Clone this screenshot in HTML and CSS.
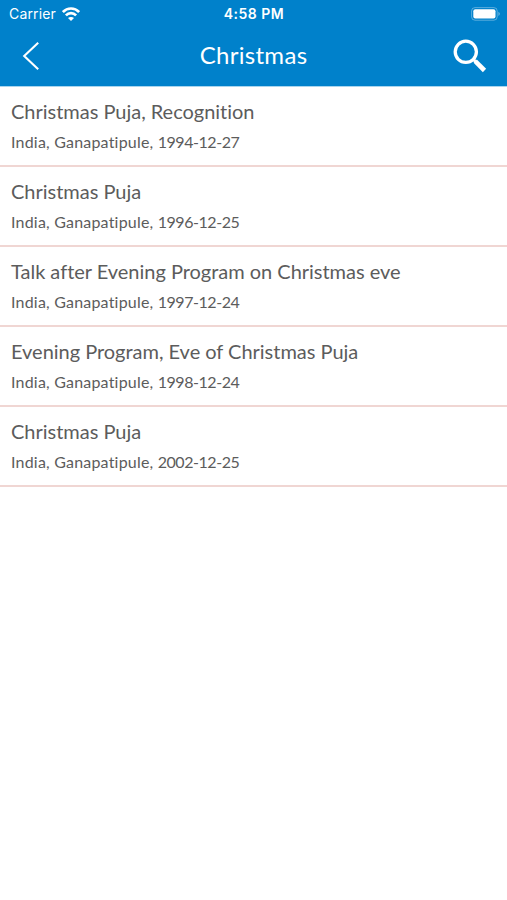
FILE: index.html
```html
<!DOCTYPE html>
<html lang="en">
<head>
    <meta charset="UTF-8">
    <meta name="viewport" content="width=device-width, initial-scale=1.0">
    <title>Christmas</title>
    <link rel="stylesheet" href="styles.css">
</head>
<body>
    <header class="header">
        <div class="status-bar">
            <div class="carrier">
                <span>Carrier</span>
                <svg class="wifi" width="18" height="14" viewBox="0 0 18 14" fill="none" stroke="#fff" stroke-width="2.6">
                    <path d="M0.9 5C5.3 0.4 12.7 0.4 17.1 5"/>
                    <path d="M3.9 8.4C6.7 5.4 11.3 5.4 14.1 8.4"/>
                    <path d="M9 14L6 11C7.6 9.5 10.4 9.5 12 11Z" fill="#fff" stroke="none"/>
                </svg>
            </div>
            <div class="time">4:58 PM</div>
            <svg class="battery" width="30" height="14" viewBox="0 0 30 14">
                <rect x="0.6" y="0.6" width="25.6" height="12.6" rx="3.4" fill="none" stroke="#fff" stroke-opacity="0.35"/>
                <rect x="2.3" y="2.3" width="22.2" height="9.2" rx="2" fill="#fff"/>
                <path d="M27.4 4.8C29.4 5.6 29.4 8.2 27.4 9Z" fill="#fff" fill-opacity="0.4"/>
            </svg>
        </div>
        <div class="nav-bar">
            <button class="nav-button back" aria-label="Back">
                <svg width="18" height="30" viewBox="0 0 18 30" fill="none" stroke="#fff" stroke-width="2.1">
                    <path d="M16.2 1.8L2.2 15L16.2 28.2"/>
                </svg>
            </button>
            <h1>Christmas</h1>
            <button class="nav-button search" aria-label="Search">
                <svg width="34" height="34" viewBox="0 0 34 34" fill="none" stroke="#fff">
                    <circle cx="12.8" cy="12.8" r="10.6" stroke-width="3.3"/>
                    <path d="M20.2 20.2L23 23" stroke-width="3"/>
                    <path d="M22.2 22.2L31.5 31.5" stroke-width="4.6"/>
                </svg>
            </button>
        </div>
    </header>

    <ul class="talks">
        <li class="talk">
            <h2>Christmas Puja, Recognition</h2>
            <p>India, Ganapatipule, <time>1994-12-27</time></p>
        </li>
        <li class="talk">
            <h2>Christmas Puja</h2>
            <p>India, Ganapatipule, <time>1996-12-25</time></p>
        </li>
        <li class="talk">
            <h2>Talk after Evening Program on Christmas eve</h2>
            <p>India, Ganapatipule, <time>1997-12-24</time></p>
        </li>
        <li class="talk">
            <h2>Evening Program, Eve of Christmas Puja</h2>
            <p>India, Ganapatipule, <time>1998-12-24</time></p>
        </li>
        <li class="talk">
            <h2>Christmas Puja</h2>
            <p>India, Ganapatipule, <time>2002-12-25</time></p>
        </li>
    </ul>
</body>
</html>
```
FILE: styles.css
```css
* {
    box-sizing: border-box;
}
body {
    margin: 0;
    background-color: #fff;
    color: #5c5c5c;
    font-family: Avenir, Lato, sans-serif;
    font-variant-ligatures: none;
}
.header {
    height: 87px;
    background-color: #0081cb;
    border-bottom: 1px solid #a9d5ee;
    color: #fff;
}
.status-bar {
    display: grid;
    grid-template-columns: 1fr auto 1fr;
    align-items: center;
    height: 27px;
    padding: 0 6px 0 9px;
    font-family: Inter, sans-serif;
    font-size: 14px;
}
.carrier {
    display: flex;
    align-items: center;
    gap: 6px;
    letter-spacing: 0.15px;
}
.time {
    margin-left: -2px;
    font-weight: 600;
    letter-spacing: 0.5px;
}
.battery {
    justify-self: end;
}
.nav-bar {
    display: grid;
    grid-template-columns: 60px 1fr 60px;
    align-items: center;
    height: 57px;
}
.nav-bar h1 {
    margin: -2px 0 0;
    font-size: 24px;
    font-weight: 400;
    letter-spacing: 0.3px;
    text-align: center;
}
.nav-button {
    display: flex;
    padding: 0;
    border: none;
    background: none;
    cursor: pointer;
}
.back {
    margin-left: 22px;
}
.search {
    margin-left: 6px;
}
.talks {
    margin: 0;
    padding: 0;
    list-style: none;
}
.talk {
    height: 80px;
    padding: 11px 11px 0;
    border-bottom: 2px solid #f0d6d3;
}
.talk h2 {
    margin: 0;
    font-size: 20px;
    font-weight: 400;
    line-height: 26px;
    letter-spacing: -0.02px;
    white-space: nowrap;
}
.talk p {
    margin: 7px 0 0;
    font-size: 16px;
    line-height: 22px;
    letter-spacing: 0.2px;
}
.talk time {
    letter-spacing: -0.45px;
}
```
